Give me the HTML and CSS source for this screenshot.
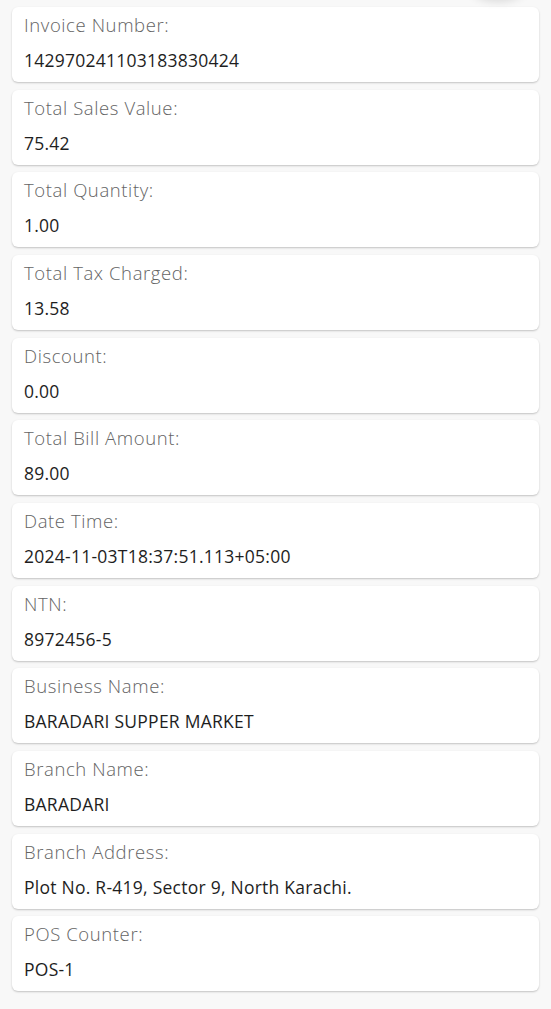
FILE: index.html
```html
<!DOCTYPE html>
<html>
<head>
<meta charset="utf-8">
<link rel="stylesheet" href="styles.css">
</head>
<body>
<div class="fab-shadow"></div>
<main class="list">
  <section class="card"><div class="label">Invoice Number:</div><div class="value">142970241103183830424</div></section>
  <section class="card"><div class="label">Total Sales Value:</div><div class="value">75.42</div></section>
  <section class="card"><div class="label">Total Quantity:</div><div class="value">1.00</div></section>
  <section class="card"><div class="label">Total Tax Charged:</div><div class="value">13.58</div></section>
  <section class="card"><div class="label">Discount:</div><div class="value">0.00</div></section>
  <section class="card"><div class="label">Total Bill Amount:</div><div class="value">89.00</div></section>
  <section class="card"><div class="label">Date Time:</div><div class="value">2024-11-03T18:37:51.113+05:00</div></section>
  <section class="card"><div class="label">NTN:</div><div class="value">8972456-5</div></section>
  <section class="card"><div class="label">Business Name:</div><div class="value">BARADARI SUPPER MARKET</div></section>
  <section class="card"><div class="label">Branch Name:</div><div class="value">BARADARI</div></section>
  <section class="card"><div class="label">Branch Address:</div><div class="value">Plot No. R-419, Sector 9, North Karachi.</div></section>
  <section class="card"><div class="label">POS Counter:</div><div class="value">POS-1</div></section>
</main>
</body>
</html>
```
FILE: styles.css
```css
html, body {
  margin: 0;
  padding: 0;
  background: #f8f8f8;
}
body {
  font-family: "Open Sans", "DejaVu Sans", sans-serif;
  position: relative;
  height: 1009px;
  overflow: hidden;
}
.fab-shadow {
  position: absolute;
  top: -30px;
  left: 470px;
  width: 56px;
  height: 30px;
  border-radius: 50%;
  box-shadow: 0 2px 8px rgba(0,0,0,0.12);
}
.list {
  display: flex;
  flex-direction: column;
  gap: 7.67px;
  padding: 7px 12px 0;
}
.card {
  background: #fff;
  border-radius: 6px;
  box-shadow: 0 1px 2px rgba(0,0,0,0.22);
  height: 75px;
  box-sizing: border-box;
  padding: 3px 12px 0;
}
.label {
  font-size: 18.5px;
  font-weight: 300;
  letter-spacing: 0.6px;
  color: #646464;
  line-height: 30px;
  white-space: nowrap;
}
.value {
  font-size: 17.5px;
  font-weight: 400;
  letter-spacing: 0.25px;
  color: #1e1e1e;
  line-height: 30px;
  margin-top: 5px;
  white-space: nowrap;
}
```
